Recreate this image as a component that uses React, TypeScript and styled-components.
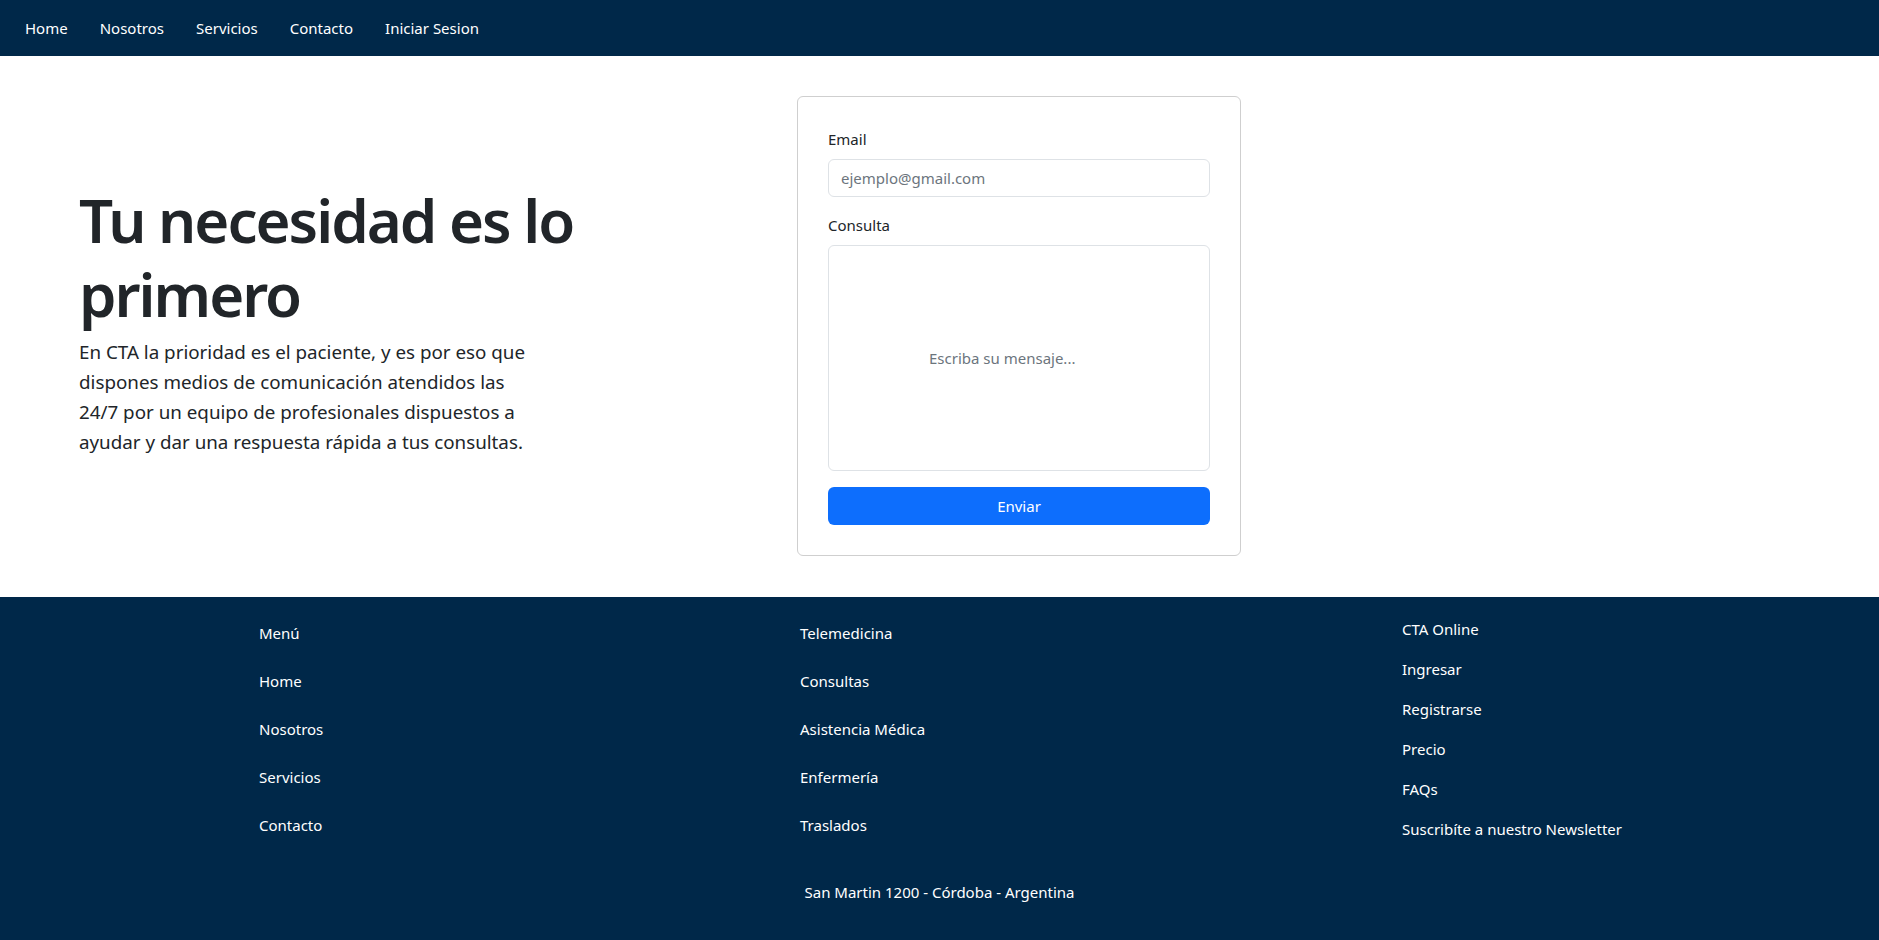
import React from "react";
import styled, { createGlobalStyle } from "styled-components";

const NAVY = "#002849";
const TEXT = "#212529";

const GlobalStyle = createGlobalStyle`
  html, body {
    margin: 0;
    padding: 0;
    background: #ffffff;
  }
  body {
    font-family: "Noto Sans", "Open Sans", "Liberation Sans", sans-serif;
    font-size: 15px;
    line-height: 24px;
    color: ${TEXT};
  }
  * { box-sizing: border-box; }
`;

const NavBar = styled.nav`
  height: 56px;
  background: ${NAVY};
  display: flex;
  align-items: center;
  padding-left: 9px;
`;

const NavLink = styled.a`
  color: #ffffff;
  text-decoration: none;
  font-size: 15px;
  line-height: 24px;
  padding: 0 16px;
  cursor: pointer;
`;

const Hero = styled.section`
  display: flex;
  align-items: center;
  padding: 40px 0 41px 79px;
`;

const HeroText = styled.div`
  flex: none;
  width: 718px;
  padding-bottom: 11px;
`;

const Title = styled.h1`
  margin: 0 0 6px;
  font-size: 60px;
  line-height: 73.5px;
  font-weight: 560;
  letter-spacing: -2px;
  color: ${TEXT};
  max-width: 560px;
`;

const Lead = styled.p`
  margin: 0;
  font-size: 18.8px;
  line-height: 30px;
  font-weight: 400;
  color: ${TEXT};
  max-width: 464px;
`;

const FormCard = styled.form`
  flex: none;
  width: 444px;
  padding: 30px;
  border: 1px solid #cfcfcf;
  border-radius: 6px;
  background: #ffffff;
  display: flex;
  flex-direction: column;
`;

const Field = styled.div`
  display: flex;
  flex-direction: column;
  margin-bottom: 16px;
`;

const Label = styled.label`
  font-size: 15px;
  line-height: 24px;
  margin-bottom: 8px;
  color: ${TEXT};
`;

const TextInput = styled.input`
  height: 38px;
  width: 100%;
  padding: 6px 12px;
  border: 1px solid #dee2e6;
  border-radius: 6px;
  font-family: inherit;
  font-size: 15px;
  line-height: 24px;
  color: ${TEXT};
  outline: none;
  &::placeholder { color: #6c757d; }
`;

const TextArea = styled.textarea`
  height: 226px;
  width: 100%;
  padding: 100px 12px 12px 100px;
  border: 1px solid #dee2e6;
  border-radius: 6px;
  font-family: inherit;
  font-size: 15px;
  line-height: 24px;
  color: ${TEXT};
  resize: none;
  outline: none;
  &::placeholder { color: #6c757d; }
`;

const SubmitButton = styled.button`
  height: 38px;
  width: 100%;
  border: none;
  border-radius: 6px;
  background: #0d6efd;
  color: #ffffff;
  font-family: inherit;
  font-size: 15px;
  line-height: 24px;
  cursor: pointer;
`;

const Footer = styled.footer`
  background: ${NAVY};
  color: #ffffff;
  padding: 20px 0 37px;
`;

const FooterGrid = styled.div`
  display: grid;
  grid-template-columns: 541px 602px auto;
  padding-left: 259px;
`;

const FooterColumn = styled.ul<{ $gap: number; $offset: number }>`
  list-style: none;
  margin: 0;
  padding: ${(p) => p.$offset}px 0 0;
  display: flex;
  flex-direction: column;
  gap: ${(p) => p.$gap}px;
`;

const FooterItem = styled.li`
  font-size: 15px;
  line-height: 24px;
  color: #ffffff;
`;

const Address = styled.p`
  margin: 39px 0 0;
  text-align: center;
  font-size: 15px;
  line-height: 24px;
  color: #ffffff;
`;

const navItems = ["Home", "Nosotros", "Servicios", "Contacto", "Iniciar Sesion"];
const col1 = ["Menú", "Home", "Nosotros", "Servicios", "Contacto"];
const col2 = ["Telemedicina", "Consultas", "Asistencia Médica", "Enfermería", "Traslados"];
const col3 = ["CTA Online", "Ingresar", "Registrarse", "Precio", "FAQs", "Suscribíte a nuestro Newsletter"];

export default function App() {
  return (
    <>
      <GlobalStyle />
      <NavBar>
        {navItems.map((n) => (
          <NavLink key={n}>{n}</NavLink>
        ))}
      </NavBar>
      <Hero>
        <HeroText>
          <Title>Tu necesidad es lo primero</Title>
          <Lead>
            En CTA la prioridad es el paciente, y es por eso que dispones medios de comunicación atendidos las 24/7 por un equipo de profesionales dispuestos a ayudar y dar una respuesta rápida a tus consultas.
          </Lead>
        </HeroText>
        <FormCard onSubmit={(e) => e.preventDefault()}>
          <Field>
            <Label htmlFor="email">Email</Label>
            <TextInput id="email" type="email" placeholder="ejemplo@gmail.com" />
          </Field>
          <Field>
            <Label htmlFor="consulta">Consulta</Label>
            <TextArea id="consulta" placeholder="Escriba su mensaje..." />
          </Field>
          <SubmitButton type="submit">Enviar</SubmitButton>
        </FormCard>
      </Hero>
      <Footer>
        <FooterGrid>
          <FooterColumn $gap={24} $offset={4}>
            {col1.map((t) => (
              <FooterItem key={t}>{t}</FooterItem>
            ))}
          </FooterColumn>
          <FooterColumn $gap={24} $offset={4}>
            {col2.map((t) => (
              <FooterItem key={t}>{t}</FooterItem>
            ))}
          </FooterColumn>
          <FooterColumn $gap={16} $offset={0}>
            {col3.map((t) => (
              <FooterItem key={t}>{t}</FooterItem>
            ))}
          </FooterColumn>
        </FooterGrid>
        <Address>San Martin 1200 - Córdoba - Argentina</Address>
      </Footer>
    </>
  );
}
